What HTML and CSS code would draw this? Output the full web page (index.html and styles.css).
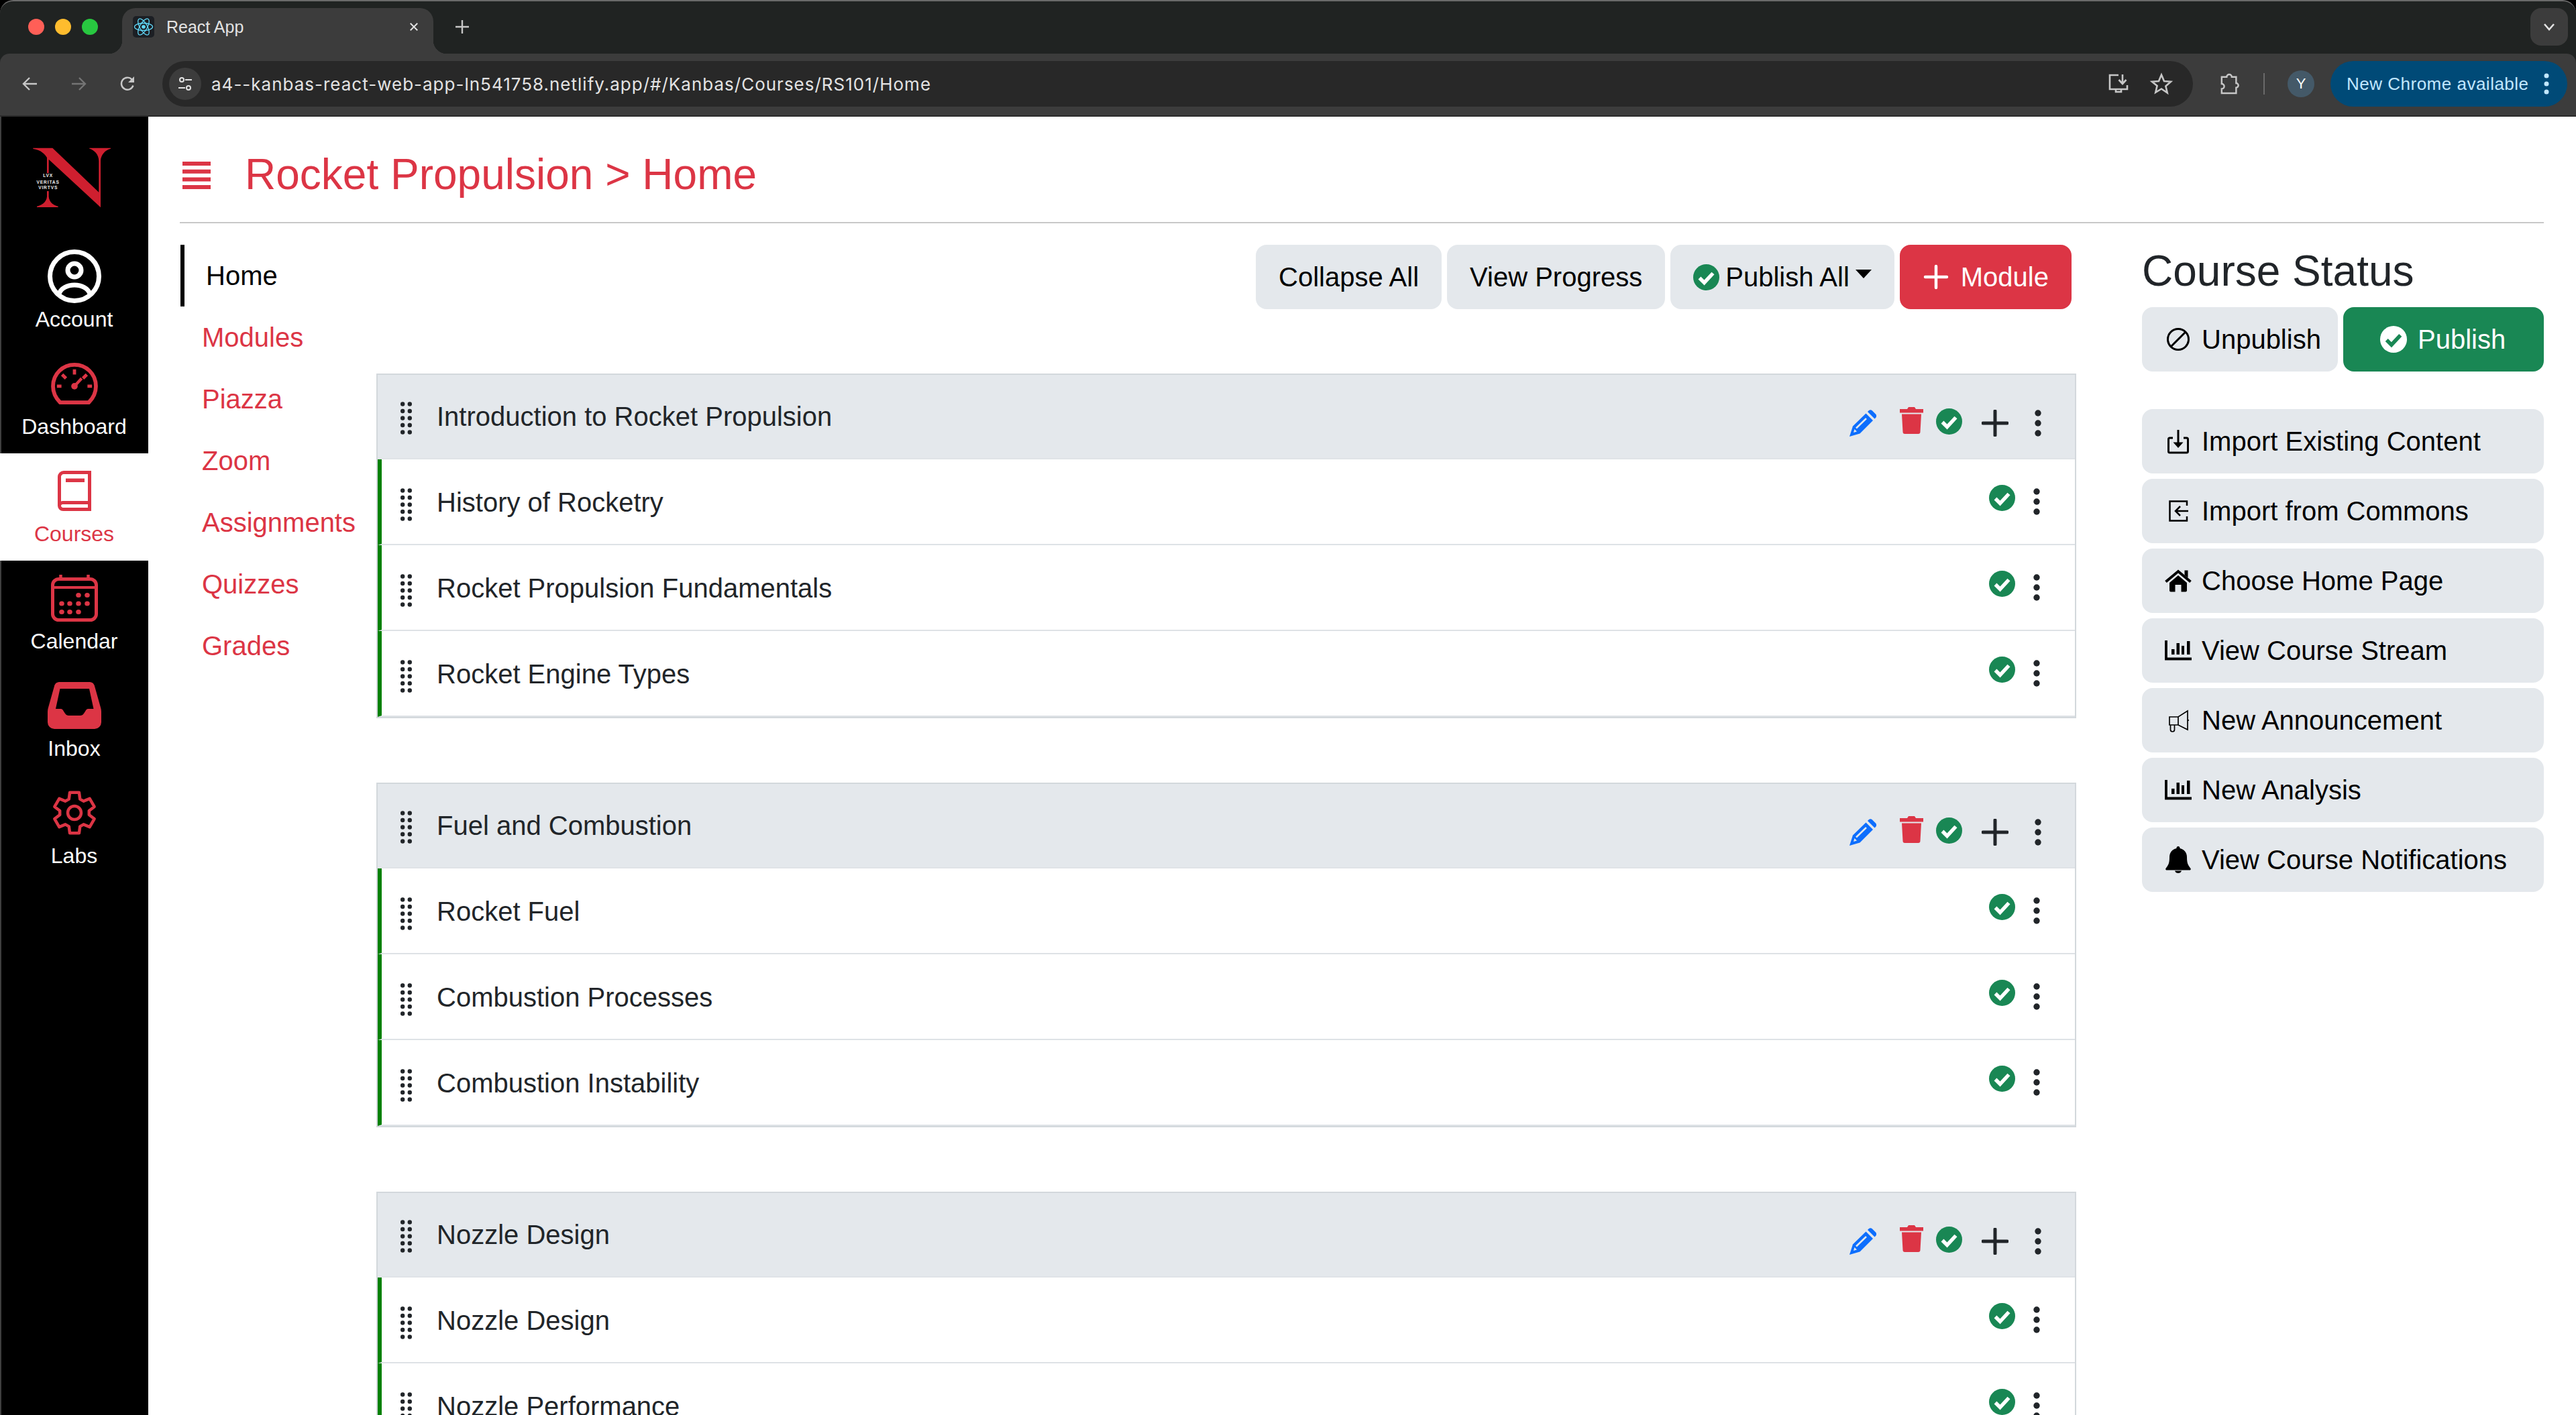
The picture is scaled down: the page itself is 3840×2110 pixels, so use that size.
FILE: index.html
```html
<!DOCTYPE html>
<html lang="en">
<head>
<meta charset="utf-8">
<title>React App</title>
<link rel="stylesheet" href="styles.css">
</head>
<body>
<svg class="defs" aria-hidden="true">
  <symbol id="grip" viewBox="0 0 17 49"><g fill="#212529"><circle cx="3.2" cy="3.5" r="3.2"/><circle cx="13.8" cy="3.5" r="3.2"/><circle cx="3.2" cy="14" r="3.2"/><circle cx="13.8" cy="14" r="3.2"/><circle cx="3.2" cy="24.5" r="3.2"/><circle cx="13.8" cy="24.5" r="3.2"/><circle cx="3.2" cy="35" r="3.2"/><circle cx="13.8" cy="35" r="3.2"/><circle cx="3.2" cy="45.5" r="3.2"/><circle cx="13.8" cy="45.5" r="3.2"/></g></symbol>
  <symbol id="check" viewBox="0 0 39 39"><circle cx="19.5" cy="19.5" r="19.5" fill="#198754"/><path d="M9.5 20.5l7 7L29.5 13.5" fill="none" stroke="#fff" stroke-width="5.5"/></symbol>
  <symbol id="checkw" viewBox="0 0 39 39"><circle cx="19.5" cy="19.5" r="19.5" fill="#fff"/><path d="M9.5 20.5l7 7L29.5 13.5" fill="none" stroke="#198754" stroke-width="5.5"/></symbol>
  <symbol id="dots" viewBox="0 0 10 40"><g fill="#212529"><circle cx="5" cy="5" r="4.7"/><circle cx="5" cy="20" r="4.7"/><circle cx="5" cy="35" r="4.7"/></g></symbol>
  <symbol id="plus" viewBox="0 0 40 40"><path d="M20 2v36M2 20h36" fill="none" stroke="#212529" stroke-width="5" stroke-linecap="round"/></symbol>
  <symbol id="pencil" viewBox="0 0 40 40"><path d="M5 24.5L24.5 5.5 35 16 15.5 35.5 0 40Z" fill="#0d6efd"/><path d="M27 3l1.500-1.500a4 4 0 0 1 5.500 0l5 5a4 4 0 0 1 0 5.500L37.500 13.500Z" fill="#0d6efd"/><path d="M10 27.500L25 13" stroke="#e4e8ec" stroke-width="2.500" fill="none"/><path d="M6 34l1.500-5 3.500 3.500Z" fill="#e4e8ec"/></symbol>
  <symbol id="trash" viewBox="0 0 35 40"><path d="M0 3h11l2-3h9l2 3h11v5.500H0Z" fill="#dc3545"/><path d="M3 10.500h29l-1.500 26.500a3 3 0 0 1-3 3h-20a3 3 0 0 1-3-3Z" fill="#dc3545"/></symbol>
  <symbol id="ban" viewBox="0 0 40 40"><circle cx="20" cy="20" r="15.500" fill="none" stroke="#000" stroke-width="3"/><path d="M9 31L31 9" stroke="#000" stroke-width="3"/></symbol>
  <symbol id="import" viewBox="0 0 40 40"><path d="M12 15H7.500a2 2 0 0 0-2 2v18a2 2 0 0 0 2 2h25a2 2 0 0 0 2-2V17a2 2 0 0 0-2-2H28" fill="none" stroke="#000" stroke-width="3"/><path d="M20 3v21" stroke="#000" stroke-width="3"/><path d="M12.500 21.500L20 30l7.500-8.500Z"/></symbol>
  <symbol id="commons" viewBox="0 0 40 40"><path d="M33 12V5.500H7.500v29H33V28" fill="none" stroke="#000" stroke-width="2.500"/><path d="M35 20H17M23 13l-7 7 7 7" fill="none" stroke="#000" stroke-width="2.500"/></symbol>
  <symbol id="home" viewBox="0 0 40 40"><path d="M1.500 21.500L20 6l18.500 15.500" fill="none" stroke="#000" stroke-width="4"/><path d="M29.500 4.500h5v11l-5-4Z"/><path d="M7 23L20 12l13 11v11.500a2 2 0 0 1-2 2h-6.500V26h-9v10.500H9a2 2 0 0 1-2-2Z"/></symbol>
  <symbol id="chart" viewBox="0 0 40 30"><path d="M2 0v27.500h38" fill="none" stroke="#000" stroke-width="3.800"/><path d="M10 13h4.500v8H10ZM17.500 4h4.500v17h-4.500ZM25 8h4v13h-4ZM33 1h4.500v20H33Z"/></symbol>
  <symbol id="mega" viewBox="0 0 40 40"><path d="M7 15h13L34 6v28L20 27H7Z M20 15v12 M35 19v2 M8.500 27v7a3 3 0 0 0 6 0v-7" fill="none" stroke="#000" stroke-width="1.700"/></symbol>
  <symbol id="bell" viewBox="0 0 40 40"><path d="M20 0a2.500 2.500 0 0 1 2.500 3C29 4.500 33 9.500 33 16c0 10 2 12 5.500 17 .8 1.200 0 2.500-1.500 2.500H3c-1.500 0-2.300-1.300-1.500-2.500C5 28 7 26 7 16c0-6.500 4-11.500 10.500-13A2.500 2.500 0 0 1 20 0ZM15 36.500h10c-.7 2.500-2.700 3.500-5 3.500s-4.300-1-5-3.500Z"/></symbol>
</svg>

<header class="chrome">
  <div class="tabstrip">
    <span class="light light-red"></span>
    <span class="light light-yellow"></span>
    <span class="light light-green"></span>
    <div class="tab">
      <svg class="favicon" viewBox="0 0 32 32"><rect width="32" height="32" rx="5" fill="#1c1f24"/><g fill="none" stroke="#61dafb" stroke-width="1.300"><ellipse cx="16" cy="16" rx="13.500" ry="5.500"/><ellipse cx="16" cy="16" rx="13.500" ry="5.500" transform="rotate(60 16 16)"/><ellipse cx="16" cy="16" rx="13.500" ry="5.500" transform="rotate(120 16 16)"/></g><circle cx="16" cy="16" r="2.800" fill="#61dafb"/></svg>
      <span class="tab-title">React App</span>
      <svg class="tab-close" viewBox="0 0 16 16"><path d="M2 2l12 12M14 2L2 14" stroke="#e3e3e3" stroke-width="2.200"/></svg>
    </div>
    <svg class="tab-new" viewBox="0 0 22 22"><path d="M11 1v20M1 11h20" stroke="#c7c7c7" stroke-width="2.400"/></svg>
    <div class="tab-search"><svg class="tab-chevron" viewBox="0 0 18 12"><path d="M2 2l7 8 7-8" fill="none" stroke="#e3e3e3" stroke-width="2.600"/></svg></div>
  </div>
  <div class="toolbar">
    <svg class="tool" viewBox="0 0 24 24"><path d="M23 12H3M12 3l-9 9 9 9" fill="none" stroke="#c7c7c7" stroke-width="2.400"/></svg>
    <svg class="tool" viewBox="0 0 24 24"><path d="M1 12h20M12 3l9 9-9 9" fill="none" stroke="#757575" stroke-width="2.400"/></svg>
    <svg class="tool tool-reload" viewBox="0 0 24 24"><path d="M20.500 14.500A9 9 0 1 1 18.500 5.500L21 8" fill="none" stroke="#c7c7c7" stroke-width="2.400"/><path d="M22 1v9h-9Z" fill="#c7c7c7"/></svg>
    <div class="omnibox">
      <div class="site-chip"><svg class="site-icon" viewBox="0 0 24 24"><circle cx="7" cy="6" r="3" fill="none" stroke="#e3e3e3" stroke-width="2"/><path d="M12 6h10M2 18h10" stroke="#e3e3e3" stroke-width="2"/><circle cx="17" cy="18" r="3" fill="none" stroke="#e3e3e3" stroke-width="2"/></svg></div>
      <span class="url">a4--kanbas-react-web-app-ln541758.netlify.app/#/Kanbas/Courses/RS101/Home</span>
      <svg class="omni-icon" viewBox="0 0 32 32"><path d="M16 3H3v21h26V18M22 2v13M16.500 10l5.500 6 5.500-6M12 24v4h8v-4" fill="none" stroke="#c7c7c7" stroke-width="2.600"/></svg>
      <svg class="omni-icon" viewBox="0 0 32 32"><path d="M16 2.500l4 9.500 10 .8-7.600 6.600 2.300 9.900L16 23.500l-8.700 5.300 2.300-9.900L2 12.800l10-.8Z" fill="none" stroke="#c7c7c7" stroke-width="2.600"/></svg>
    </div>
    <svg class="puzzle" viewBox="0 0 32 34"><path d="M3 6h8a4 4 0 0 1 8 0h7v10a3.500 3.500 0 0 1 0 7v9H3v-7a4 4 0 0 0 0-8Z" fill="none" stroke="#c7c7c7" stroke-width="2.600"/></svg>
    <span class="divider"></span>
    <span class="avatar">Y</span>
    <div class="update-pill"><span>New Chrome available</span><svg class="pill-dots" viewBox="0 0 8 32"><g fill="#c2e7ff"><circle cx="4" cy="4" r="3.500"/><circle cx="4" cy="16" r="3.500"/><circle cx="4" cy="28" r="3.500"/></g></svg></div>
  </div>
</header>

<div class="app">
  <nav class="sidebar">
    <div class="logo">
      <svg class="logo-mark" viewBox="0 0 480 480">
        <path d="M88 92H175L382 290V150C382 120 360 100 340 95V92H435V95C410 100 390 125 390 150V358L158 143V205H150V135C135 110 110 98 88 96Z" fill="#cf1f2f"/>
        <path d="M150 285H158V310C160 335 180 350 200 353V357H105V353C125 350 148 335 150 310Z" fill="#cf1f2f"/>
        <text class="logo-text" x="155" y="223">LVX</text>
        <text class="logo-text" x="155" y="251">VERITAS</text>
        <text class="logo-text" x="155" y="277">VIRTVS</text>
      </svg>
    </div>
    <a class="side-item">
      <span class="side-icon"><svg class="ic-account" viewBox="0 0 80 80"><circle cx="40" cy="40" r="36.500" fill="none" stroke="#fff" stroke-width="7"/><circle cx="40" cy="31" r="10" fill="none" stroke="#fff" stroke-width="7"/><path d="M17 66c3-8 12-13 23-13s20 5 23 13" fill="none" stroke="#fff" stroke-width="7"/></svg></span>
      <span>Account</span>
    </a>
    <a class="side-item">
      <span class="side-icon"><svg class="ic-dash" viewBox="0 0 72 64"><path d="M14 61C7 54 3 46 3 36 3 17 18 3 36 3s33 14 33 33c0 10-4 18-11 25Z" fill="none" stroke="#dc3545" stroke-width="6"/><path d="M36 10v8M9 36h7M56 36h7M17 18l6 6M55 18l-6 6" stroke="#dc3545" stroke-width="5"/><circle cx="36" cy="36" r="5" fill="#dc3545"/><path d="M36 36l11-12" stroke="#dc3545" stroke-width="4.500"/></svg></span>
      <span>Dashboard</span>
    </a>
    <a class="side-item side-active">
      <span class="side-icon"><svg class="ic-book" viewBox="0 0 50 60"><path d="M47.500 2.500H9A6.500 6.500 0 0 0 2.500 9v43A5.500 5.500 0 0 0 8 57.500h39.500ZM2.500 52A5 5 0 0 1 8 47.500h39.500" fill="none" stroke="#dc3545" stroke-width="5"/><path d="M12 11.500h28v5.500H12Z" fill="#dc3545"/></svg></span>
      <span>Courses</span>
    </a>
    <a class="side-item">
      <span class="side-icon"><svg class="ic-cal" viewBox="0 0 70 70"><rect x="2.500" y="6.500" width="65" height="61" rx="9" fill="none" stroke="#dc3545" stroke-width="5"/><path d="M3 19h64" stroke="#dc3545" stroke-width="4"/><path d="M14.500 0v6M55.500 0v6" stroke="#dc3545" stroke-width="4.500"/><g fill="#dc3545"><ellipse cx="41" cy="30.500" rx="3.800" ry="3.500"/><ellipse cx="54" cy="30.500" rx="3.800" ry="3.500"/><ellipse cx="16" cy="43" rx="3.800" ry="3.500"/><ellipse cx="28" cy="43" rx="3.800" ry="3.500"/><ellipse cx="41" cy="43" rx="3.800" ry="3.500"/><ellipse cx="54" cy="43" rx="3.800" ry="3.500"/><ellipse cx="16" cy="55.500" rx="3.800" ry="3.500"/><ellipse cx="28" cy="55.500" rx="3.800" ry="3.500"/><ellipse cx="41" cy="55.500" rx="3.800" ry="3.500"/></g></svg></span>
      <span>Calendar</span>
    </a>
    <a class="side-item">
      <span class="side-icon"><svg class="ic-inbox" viewBox="0 0 80 70"><path fill-rule="evenodd" fill="#dc3545" d="M18 0H62C66 0 69 2 70 6L79 38C80 41 80 44 80 46V60A10 10 0 0 1 70 70H10A10 10 0 0 1 0 60V46C0 44 0 41 1 38L10 6C11 2 14 0 18 0ZM18.500 10L12 40H20C24 40 25 50 31 50H49C55 50 56 40 60 40H68.500L62 10Z"/></svg></span>
      <span>Inbox</span>
    </a>
    <a class="side-item">
      <span class="side-icon"><svg class="ic-gear" viewBox="-33 -33 66 66"><polygon points="-8.240,-20.400 -6.970,-30.200 6.970,-30.200 8.240,-20.400 13.550,-17.340 22.670,-21.140 29.650,-9.060 21.790,-3.060 21.790,3.060 29.650,9.060 22.670,21.140 13.550,17.340 8.240,20.400 6.970,30.200 -6.970,30.200 -8.240,20.400 -13.550,17.340 -22.670,21.140 -29.650,9.060 -21.790,3.060 -21.790,-3.060 -29.650,-9.060 -22.670,-21.140 -13.550,-17.340" fill="none" stroke="#dc3545" stroke-width="4.500" stroke-linejoin="round"/><circle r="10" fill="none" stroke="#dc3545" stroke-width="4.500"/></svg></span>
      <span>Labs</span>
    </a>
  </nav>

  <main class="main">
    <div class="title-row">
      <svg class="burger" viewBox="0 0 42 41"><path d="M0 0h42v6H0ZM0 11.700h42v6H0ZM0 23.400h42v6H0ZM0 35h42v6H0Z" fill="#dc3545"/></svg>
      <h1 class="title">Rocket Propulsion &gt; Home</h1>
    </div>
    <hr class="rule">
    <div class="content">
      <ul class="course-nav">
        <li class="course-link course-link-active">Home</li>
        <li class="course-link">Modules</li>
        <li class="course-link">Piazza</li>
        <li class="course-link">Zoom</li>
        <li class="course-link">Assignments</li>
        <li class="course-link">Quizzes</li>
        <li class="course-link">Grades</li>
      </ul>

      <section class="center">
        <div class="controls">
          <button class="btn">Collapse All</button>
          <button class="btn">View Progress</button>
          <button class="btn btn-publish-all"><svg class="ic-check"><use href="#check"/></svg><span>Publish All</span><span class="caret"></span></button>
          <button class="btn btn-module"><svg class="ic-40" viewBox="0 0 40 40"><path d="M20 4v32M4 20h32" stroke="#fff" stroke-width="4.500" stroke-linecap="round"/></svg><span>Module</span></button>
        </div>

        <div class="module">
          <div class="mod-head"><svg class="grip"><use href="#grip"/></svg><span>Introduction to Rocket Propulsion</span>
            <div class="head-icons"><svg class="ic-pencil"><use href="#pencil"/></svg><svg class="ic-trash"><use href="#trash"/></svg><svg class="ic-check ic-check-head"><use href="#check"/></svg><svg class="ic-plus"><use href="#plus"/></svg><svg class="ic-dots"><use href="#dots"/></svg></div></div>
          <div class="lesson"><svg class="grip"><use href="#grip"/></svg><span class="lesson-text">History of Rocketry</span><div class="row-icons"><svg class="ic-check ic-check-row"><use href="#check"/></svg><svg class="ic-dots"><use href="#dots"/></svg></div></div>
          <div class="lesson"><svg class="grip"><use href="#grip"/></svg><span class="lesson-text">Rocket Propulsion Fundamentals</span><div class="row-icons"><svg class="ic-check ic-check-row"><use href="#check"/></svg><svg class="ic-dots"><use href="#dots"/></svg></div></div>
          <div class="lesson"><svg class="grip"><use href="#grip"/></svg><span class="lesson-text">Rocket Engine Types</span><div class="row-icons"><svg class="ic-check ic-check-row"><use href="#check"/></svg><svg class="ic-dots"><use href="#dots"/></svg></div></div>
        </div>

        <div class="module">
          <div class="mod-head"><svg class="grip"><use href="#grip"/></svg><span>Fuel and Combustion</span>
            <div class="head-icons"><svg class="ic-pencil"><use href="#pencil"/></svg><svg class="ic-trash"><use href="#trash"/></svg><svg class="ic-check ic-check-head"><use href="#check"/></svg><svg class="ic-plus"><use href="#plus"/></svg><svg class="ic-dots"><use href="#dots"/></svg></div></div>
          <div class="lesson"><svg class="grip"><use href="#grip"/></svg><span class="lesson-text">Rocket Fuel</span><div class="row-icons"><svg class="ic-check ic-check-row"><use href="#check"/></svg><svg class="ic-dots"><use href="#dots"/></svg></div></div>
          <div class="lesson"><svg class="grip"><use href="#grip"/></svg><span class="lesson-text">Combustion Processes</span><div class="row-icons"><svg class="ic-check ic-check-row"><use href="#check"/></svg><svg class="ic-dots"><use href="#dots"/></svg></div></div>
          <div class="lesson"><svg class="grip"><use href="#grip"/></svg><span class="lesson-text">Combustion Instability</span><div class="row-icons"><svg class="ic-check ic-check-row"><use href="#check"/></svg><svg class="ic-dots"><use href="#dots"/></svg></div></div>
        </div>

        <div class="module">
          <div class="mod-head"><svg class="grip"><use href="#grip"/></svg><span>Nozzle Design</span>
            <div class="head-icons"><svg class="ic-pencil"><use href="#pencil"/></svg><svg class="ic-trash"><use href="#trash"/></svg><svg class="ic-check ic-check-head"><use href="#check"/></svg><svg class="ic-plus"><use href="#plus"/></svg><svg class="ic-dots"><use href="#dots"/></svg></div></div>
          <div class="lesson"><svg class="grip"><use href="#grip"/></svg><span class="lesson-text">Nozzle Design</span><div class="row-icons"><svg class="ic-check ic-check-row"><use href="#check"/></svg><svg class="ic-dots"><use href="#dots"/></svg></div></div>
          <div class="lesson"><svg class="grip"><use href="#grip"/></svg><span class="lesson-text">Nozzle Performance</span><div class="row-icons"><svg class="ic-check ic-check-row"><use href="#check"/></svg><svg class="ic-dots"><use href="#dots"/></svg></div></div>
        </div>
      </section>

      <aside class="status">
        <h2 class="status-title">Course Status</h2>
        <div class="status-btns">
          <button class="btn btn-unpublish"><svg class="ic-40"><use href="#ban"/></svg><span>Unpublish</span></button>
          <button class="btn btn-publish"><svg class="ic-40"><use href="#checkw"/></svg><span>Publish</span></button>
        </div>
        <div class="actions">
          <button class="btn action"><svg class="ic-40"><use href="#import"/></svg><span>Import Existing Content</span></button>
          <button class="btn action"><svg class="ic-40"><use href="#commons"/></svg><span>Import from Commons</span></button>
          <button class="btn action"><svg class="ic-40"><use href="#home"/></svg><span>Choose Home Page</span></button>
          <button class="btn action"><svg class="ic-chart"><use href="#chart"/></svg><span>View Course Stream</span></button>
          <button class="btn action"><svg class="ic-40"><use href="#mega"/></svg><span>New Announcement</span></button>
          <button class="btn action"><svg class="ic-chart"><use href="#chart"/></svg><span>New Analysis</span></button>
          <button class="btn action"><svg class="ic-40"><use href="#bell"/></svg><span>View Course Notifications</span></button>
        </div>
      </aside>
    </div>
  </main>
</div>
</body>
</html>
```

FILE: styles.css
```css
* { box-sizing: border-box; }
html, body { margin: 0; height: 2110px; overflow: hidden; background: #000; }
body { font-family: "Liberation Sans", Arial, sans-serif; color: #212529; display: flex; flex-direction: column; }
.defs { position: absolute; width: 0; height: 0; }
svg { display: block; flex: none; overflow: visible; }

/* browser chrome */
.chrome { height: 174px; flex: none; background: #202322; border-radius: 20px 20px 0 0; border-top: 2px solid #6a6a6a; overflow: hidden; }
.tabstrip { height: 78px; display: flex; align-items: flex-start; padding-left: 42px; position: relative; }
.light { width: 24px; height: 24px; border-radius: 50%; margin-top: 26px; margin-right: 16px; flex: none; }
.light-red { background: #ff5f57; }
.light-yellow { background: #febc2e; }
.light-green { background: #28c840; }
.tab { width: 464px; height: 68px; margin-top: 10px; margin-left: 20px; background: #3c3c3c; border-radius: 20px 20px 0 0; display: flex; align-items: center; padding: 0 22px 12px 16px; position: relative; }
.tab::before, .tab::after { content: ""; position: absolute; bottom: 0; width: 20px; height: 20px; }
.tab::before { left: -20px; background: radial-gradient(circle at 0 0, transparent 20px, #3c3c3c 20.5px); }
.tab::after { right: -20px; background: radial-gradient(circle at 100% 0, transparent 20px, #3c3c3c 20.5px); }
.favicon { width: 32px; height: 32px; }
.tab-title { font-size: 25px; color: #e3e3e3; margin-left: 18px; flex: 1; }
.tab-close { width: 14px; height: 14px; }
.tab-new { width: 22px; height: 22px; margin: 27px 0 0 32px; }
.tab-search { width: 56px; height: 56px; margin: 10px 12px 0 auto; border-radius: 16px; background: #3c3c3c; display: flex; align-items: center; justify-content: center; }
.tab-chevron { width: 18px; height: 12px; }
.toolbar { height: 94px; background: #3c3c3c; border-bottom: 2px solid #2b2b2b; display: flex; align-items: center; padding: 0 13px 2px 32px; gap: 50px; border-radius: 14px 14px 0 0; }
.tool { width: 24px; height: 24px; }
.tool-reload { margin-left: -2px; }
.omnibox { width: 3032px; height: 68px; margin-left: -10px; background: #282828; border-radius: 34px; display: flex; align-items: center; padding: 0 31px 0 10px; }
.site-chip { width: 48px; height: 48px; border-radius: 50%; background: #3c3c3c; display: flex; align-items: center; justify-content: center; }
.site-icon { width: 24px; height: 24px; }
.url { font-family: Inter, "Liberation Sans", sans-serif; font-size: 26px; letter-spacing: 1px; color: #e3e3e3; margin-left: 15px; flex: 1; }
.omni-icon { width: 32px; height: 32px; margin-left: 32px; }
.puzzle { width: 30px; height: 32px; margin-left: -10px; }
.divider { width: 2px; height: 32px; background: #6a6a6a; margin-left: -15px; }
.avatar { width: 40px; height: 40px; border-radius: 50%; background: #445968; color: #fff; font-size: 22px; display: flex; align-items: center; justify-content: center; margin-left: -16px; flex: none; }
.update-pill { width: 353px; height: 68px; margin-left: -26px; background: #004a77; border-radius: 34px; color: #c2e7ff; font-size: 26px; letter-spacing: .5px; display: flex; align-items: center; justify-content: space-between; padding: 0 27px 0 24px; flex: none; }
.pill-dots { width: 8px; height: 32px; }

/* app */
.app { flex: 1; display: flex; min-height: 0; background: #fff; }
.sidebar { width: 221px; flex: none; background: #000; border-left: 2px solid #3f3f3f; display: flex; flex-direction: column; align-items: stretch; }
.logo { height: 182px; flex: none; padding: 16px 0 0 18px; }
.logo-mark { width: 160px; height: 160px; }
.logo-text { font-family: "Liberation Sans", Arial, sans-serif; font-size: 20px; font-weight: 700; letter-spacing: 2.500px; fill: #eee; text-anchor: middle; }
.side-item { height: 160px; margin-left: -2px; padding: 16px 0; display: flex; flex-direction: column; align-items: center; color: #fff; font-size: 32px; line-height: 48px; flex: none; }
.side-icon { height: 80px; display: flex; align-items: center; justify-content: center; flex: none; }
.side-active { background: #fff; color: #dc3545; }
.ic-account { width: 80px; height: 80px; }
.ic-dash { width: 70px; height: 62px; }
.ic-book { width: 50px; height: 60px; }
.ic-cal { width: 70px; height: 70px; }
.ic-inbox { width: 80px; height: 70px; }
.ic-gear { width: 66px; height: 66px; }

.main { flex: 1; min-width: 0; padding: 0 48px 0 47px; background: #fff; }
.title-row { height: 157px; padding-top: 50px; display: flex; align-items: flex-start; }
.burger { width: 42px; height: 41px; margin: 17px 51px 0 4px; }
.title { margin: 0; font-size: 64px; line-height: 72px; font-weight: 400; color: #dc3545; }
.rule { margin: 0; border: 0; height: 2px; background: #c8c8c8; }
.content { display: grid; grid-template-columns: 293px 2534px 1fr; padding-top: 32px; }

.course-nav { list-style: none; margin: 0 0 0 1px; padding: 0; }
.course-link { height: 92px; padding-left: 32px; font-size: 40px; line-height: 92px; color: #dc3545; }
.course-link-active { color: #000; border-left: 6px solid #000; }

.controls { display: flex; justify-content: flex-end; gap: 8px; margin: 0 7px 96px 0; }
.btn { height: 96px; padding: 0 32px; border: 2px solid #e4e8ec; border-radius: 16px; background: #e4e8ec; color: #000; font: 400 40px/60px "Liberation Sans", Arial, sans-serif; white-space: nowrap; text-align: left; display: flex; align-items: center; flex: none; }
.btn-publish-all { gap: 9px; }
.caret { width: 0; height: 0; border-left: 12px solid transparent; border-right: 12px solid transparent; border-top: 13px solid #000; margin: -10px 0 0 0; }
.btn-module { background: #dc3545; border-color: #dc3545; color: #fff; gap: 17px; }
.ic-40 { width: 40px; height: 40px; }
.ic-check { width: 39px; height: 39px; }

.module { border: 2px solid #d3d8dc; margin-bottom: 96px; }
.mod-head { height: 126px; background: #e4e8ec; border-bottom: 2px solid #dfe3e7; display: flex; align-items: center; padding: 0 50px 0 34px; font-size: 40px; }
.lesson { height: 128px; background: #fff; border-left: 6px solid #008000; border-bottom: 2px solid #dee2e6; display: flex; align-items: center; padding: 0 52px 0 28px; font-size: 40px; }
.grip { width: 17px; height: 49px; margin-right: 37px; margin-top: 4px; }
.lesson .grip { margin-top: 8px; }
.lesson-text { margin-top: 2px; }
.head-icons { margin-left: auto; padding-top: 20px; display: flex; align-items: center; }
.row-icons { margin-left: auto; display: flex; align-items: center; gap: 27px; }
.ic-pencil { width: 40px; height: 40px; margin-right: 35px; }
.ic-trash { width: 35px; height: 40px; margin: 0 19px 8px 0; }
.ic-check-head { margin: 0 29px 5px 0; }
.ic-plus { width: 40px; height: 40px; margin-right: 39px; }
.ic-dots { width: 10px; height: 40px; }
.ic-check-row { margin-bottom: 12px; }

.status { padding-left: 98px; }
.status-title { margin: 1px 0 15px; font-size: 64px; line-height: 77px; font-weight: 400; color: #212529; }
.status-btns { display: flex; gap: 8px; margin-bottom: 56px; }
.btn-unpublish { width: 292px; gap: 15px; padding-left: 32px; padding-right: 0; }
.btn-publish { flex: 1; background: #198754; border-color: #198754; color: #fff; gap: 16px; padding-left: 53px; padding-right: 0; }
.actions { display: flex; flex-direction: column; gap: 8px; }
.action { gap: 15px; width: 100%; }
.ic-chart { width: 40px; height: 30px; }
```
